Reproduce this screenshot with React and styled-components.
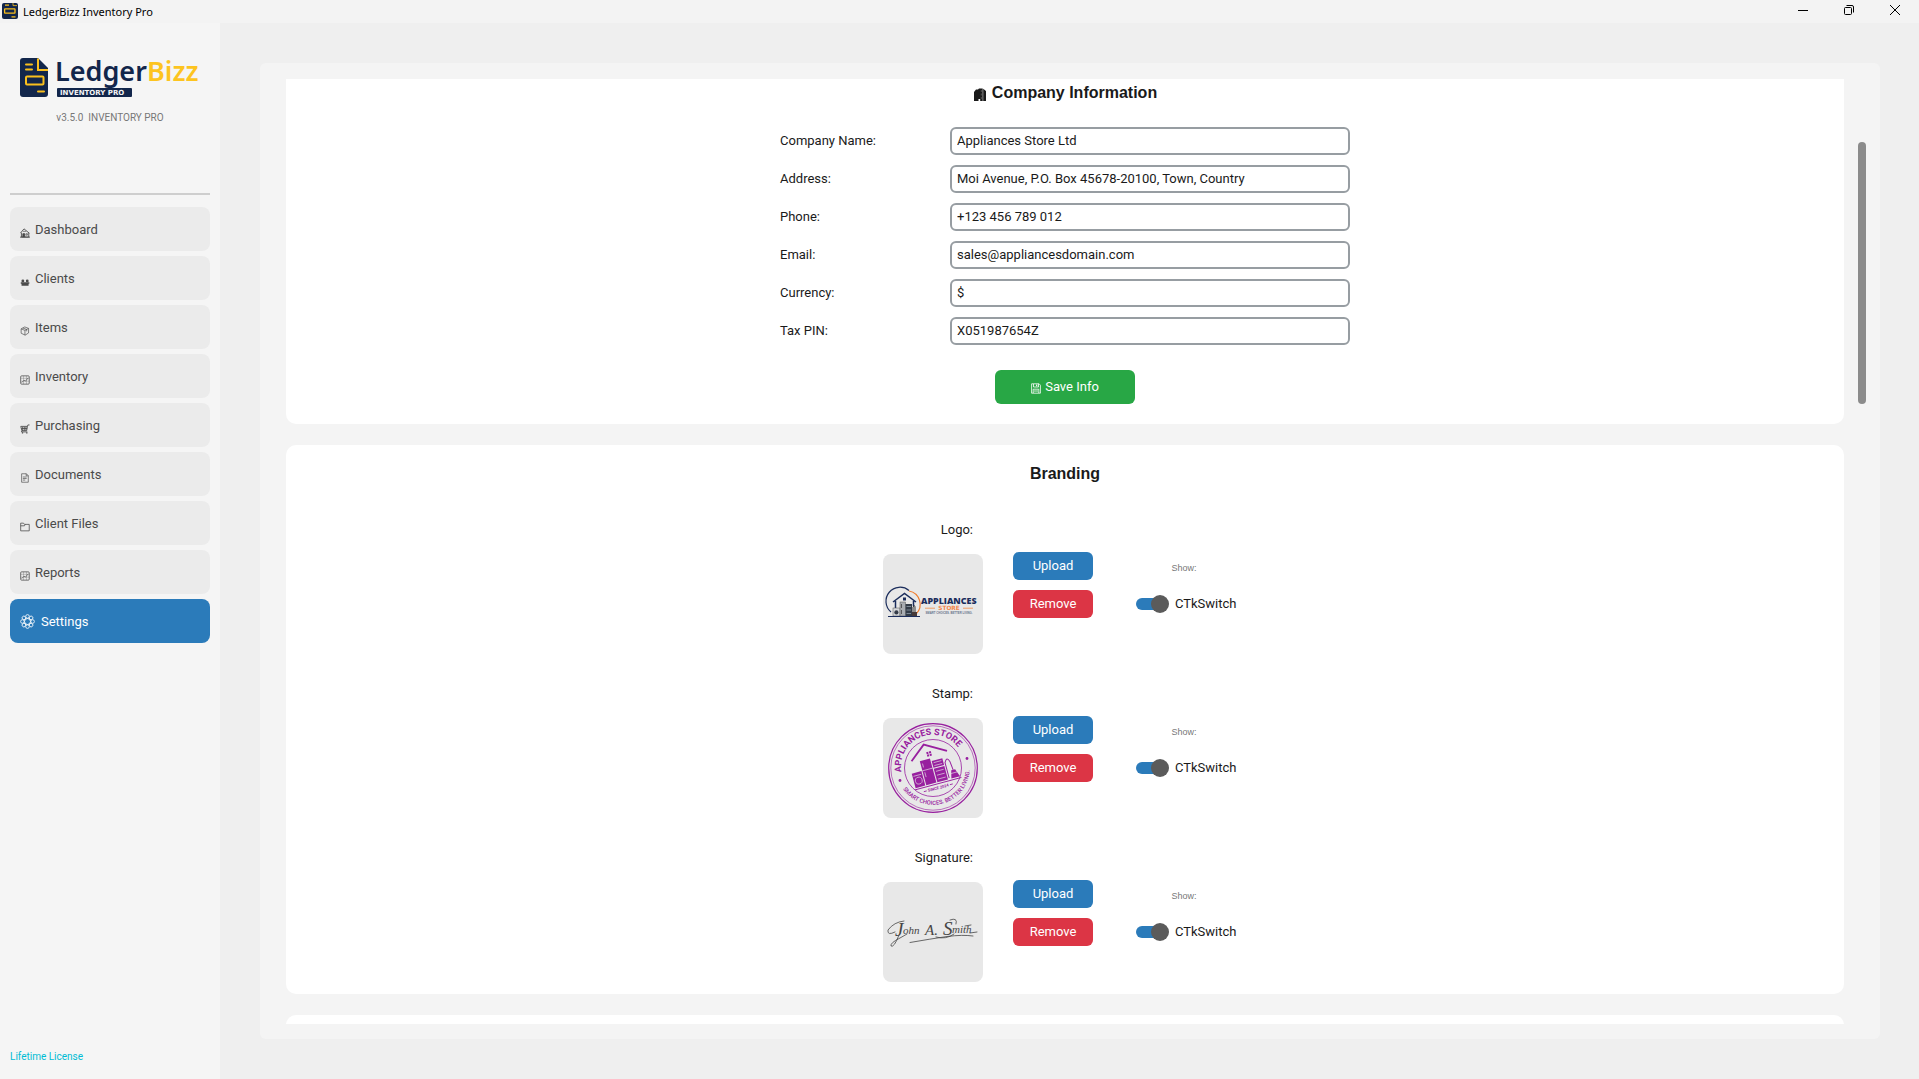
// App.jsx
import React, { useState } from "react";
import styled, { createGlobalStyle, css } from "styled-components";

const GlobalStyle = createGlobalStyle`
  * {
    box-sizing: border-box;
  }
  body {
    margin: 0;
    background-color: #efefef;
    color: #1a1a1a;
    font-family: Roboto, "Liberation Sans", sans-serif;
    font-size: 13px;
  }
  button,
  input {
    font-family: inherit;
    font-size: inherit;
  }
`;

const Window = styled.div`
  display: flex;
  flex-direction: column;
  height: 100vh;
  overflow: hidden;
`;

const TitleBar = styled.header`
  display: flex;
  align-items: flex-start;
  height: 23px;
  padding: 0 1px 0 2px;
  background-color: #f3f3f3;
  flex-shrink: 0;
`;

const TitleText = styled.span`
  flex: 1;
  padding-left: 5px;
  color: #000;
  font-family: "Noto Sans", sans-serif;
  font-size: 11px;
  line-height: 23px;
`;

const WindowButton = styled.button`
  display: flex;
  align-items: center;
  justify-content: center;
  width: 46px;
  height: 20px;
  padding: 0;
  border: none;
  background: none;
`;

const Body = styled.div`
  display: flex;
  flex: 1;
  min-height: 0;
`;

const Sidebar = styled.aside`
  display: flex;
  flex-direction: column;
  width: 220px;
  padding: 24px 10px 15px;
  background-color: #f5f5f5;
  flex-shrink: 0;
`;

const Brand = styled.div`
  display: flex;
  flex-direction: column;
  align-items: center;
  gap: 12px;
  height: 146px;
`;

const SmallText = styled.span`
  color: ${({ $color }) => $color || "#777"};
  font-size: 10px;
  line-height: 14px;
  white-space: pre;
`;

const Divider = styled.hr`
  width: 100%;
  height: 2px;
  margin: 0 0 12px;
  border: none;
  background-color: #cecece;
`;

const Nav = styled.nav`
  display: flex;
  flex-direction: column;
  flex: 1;
  gap: 5px;
`;

const NavButton = styled.button`
  display: flex;
  align-items: center;
  gap: 5px;
  height: 44px;
  padding: 1px 10px 0;
  border: none;
  border-radius: 8px;
  background-color: #ebebeb;
  color: #4a4a4a;

  svg {
    margin-top: 6px;
  }

  ${({ $active }) =>
    $active &&
    css`
      gap: 6px;
      background-color: #2b7bba;
      color: #fff;

      svg {
        margin-top: 0;
      }
    `}
`;

const Main = styled.main`
  display: flex;
  flex: 1;
  padding: 40px 39px 40px 40px;
`;

const Panel = styled.div`
  display: flex;
  flex: 1;
  gap: 14px;
  padding: 16px 14px 15px 26px;
  border-radius: 6px;
  background-color: #f4f4f4;
`;

const Viewport = styled.div`
  display: flex;
  flex-direction: column;
  flex: 1;
  gap: 21px;
  overflow: hidden;
`;

const Scrollbar = styled.div`
  width: 8px;
  padding-top: 63px;
`;

const Thumb = styled.div`
  height: 262px;
  border-radius: 4px;
  background-color: #8b8b8b;
`;

const Card = styled.section`
  display: flex;
  flex-direction: column;
  align-items: center;
  min-height: 60px;
  padding: ${({ $padding }) => $padding || "0"};
  border-radius: ${({ $cut }) => ($cut ? "0 0 10px 10px" : "10px")};
  background-color: #fff;
  flex-shrink: 0;
`;

const CardTitle = styled.h2`
  display: flex;
  align-items: center;
  gap: 5px;
  margin: 0;
  font-family: "Liberation Sans", sans-serif;
  font-size: 16px;
  font-weight: bold;
  line-height: 28px;

  svg {
    margin-top: 3px;
  }
`;

const Form = styled.form`
  display: flex;
  flex-direction: column;
  align-items: center;
  gap: 25px;
  padding-top: 20px;
`;

const Fields = styled.div`
  display: flex;
  flex-direction: column;
  gap: 10px;
`;

const Field = styled.div`
  display: grid;
  grid-template-columns: 170px 400px;
  align-items: center;
`;

const FieldLabel = styled.label`
  padding-bottom: 2px;
`;

const Input = styled.input`
  height: 28px;
  padding: 0 5px 2px;
  border: 2px solid #979da2;
  border-radius: 6px;
  outline: none;
  background-color: #fff;
  color: #1a1a1a;
`;

const Button = styled.button`
  display: flex;
  align-items: center;
  justify-content: center;
  gap: 4px;
  width: ${({ $wide }) => ($wide ? "140px" : "80px")};
  height: ${({ $wide }) => ($wide ? "34px" : "28px")};
  padding: 0 0 1px;
  border: none;
  border-radius: 6px;
  background-color: ${({ $color }) => $color};
  color: #fff;

  svg {
    margin-top: 4px;
  }
`;

const Assets = styled.div`
  display: flex;
  flex-direction: column;
  gap: 30px;
  padding-top: 32px;
`;

const Asset = styled.div`
  display: grid;
  grid-template-columns: 100px 80px 124px;
  column-gap: 30px;
  row-gap: 12px;
`;

const AssetName = styled.span`
  padding-right: 10px;
  line-height: 20px;
  text-align: right;
`;

const Preview = styled.div`
  display: flex;
  grid-row: 2;
  width: 100px;
  height: 100px;
  margin-top: 2px;
  border-radius: 8px;
  background-color: #e8e8e8;
`;

const Actions = styled.div`
  display: flex;
  flex-direction: column;
  grid-row: 2;
  gap: 10px;
`;

const ShowGroup = styled.div`
  display: flex;
  flex-direction: column;
  grid-row: 2;
  gap: 20px;
  padding: 9px 0 0 13px;
`;

const ShowLabel = styled(SmallText)`
  width: 96px;
  font-family: "Liberation Sans", sans-serif;
  font-size: 9px;
  text-align: center;
`;

const SwitchLabel = styled.label`
  display: flex;
  align-items: center;
  gap: 6px;
  line-height: 18px;
`;

const Switch = styled.input`
  display: flex;
  align-items: center;
  appearance: none;
  width: 33px;
  height: 18px;
  margin: 0;
  background: linear-gradient(
      ${({ checked }) => (checked ? "#2b7bba" : "#979da2")},
      ${({ checked }) => (checked ? "#2b7bba" : "#979da2")}
    )
    6px 3px / 20px 12px no-repeat;

  &::before {
    content: "";
    width: 15px;
    height: 12px;
    border-radius: 6px 0 0 6px;
    background-color: ${({ checked }) => (checked ? "#2b7bba" : "#979da2")};
  }

  &::after {
    content: "";
    width: 18px;
    height: 18px;
    border-radius: 50%;
    background-color: #5b5b5b;
    order: ${({ checked }) => (checked ? 1 : -1)};
  }
`;

const AppIconSvg = styled.svg`
  margin-top: 3px;
`;

const AppIcon = () => (
  <AppIconSvg width="16" height="16" viewBox="0 0 16 16" fill="none">
    <rect width="16" height="16" rx="2" fill="#12264b" />
    <g stroke="#f9bf1d" strokeWidth="1.3">
      <path d="M3 2.2h4M9.5 13.8h4" />
      <path d="M11 0v2.6h4" strokeWidth=".8" />
      <rect x="2.6" y="5.8" width="10.4" height="4.4" rx=".4" />
    </g>
  </AppIconSvg>
);

const BrandLogo = () => (
  <svg width="184" height="52" viewBox="0 -10 184 52" role="img" aria-label="LedgerBizz">
    <path d="M5 1h15l10 10v26a3 3 0 0 1-3 3H5a3 3 0 0 1-3-3V4a3 3 0 0 1 3-3z" fill="#12264b" />
    <path d="M20 1.5V13h10" stroke="#f9bf1d" strokeWidth="2" fill="none" />
    <path d="M8 7.5h6M8 12.5h6M20 34.5h6" stroke="#f9bf1d" strokeWidth="2" strokeLinecap="round" />
    <rect x="8" y="19.5" width="17.5" height="8" rx="1" stroke="#f9bf1d" strokeWidth="2" fill="none" />
    <g fontFamily="Noto Sans" fontSize="27" fontWeight="600">
      <text x="37" y="24" fill="#12264b">Ledger</text>
      <text x="129" y="24" fill="#fdc41f">Bizz</text>
    </g>
    <rect x="39" y="31" width="75" height="9" rx="1" fill="#12264b" />
    <text x="42" y="38" fontFamily="DejaVu Sans" fontSize="7" fontWeight="700" fill="#f5f5f5">
      INVENTORY PRO
    </text>
  </svg>
);

const navShapes = {
  home: (
    <>
      <path d="M.4 5.4 4.2.9l5.6 4.6M1.5 5v4.5h7.7V5" />
      <path d="M3 9.5V6h2v3.5" fill="currentColor" />
      <path d="M6.3 6h1.5v1.5H6.3zM3 3.5h3.5" strokeWidth=".7" />
      <path d="M0 9.6h10.5" />
    </>
  ),
  clients: (
    <g fill="currentColor" stroke="none">
      <circle cx="3" cy="4.1" r="1.5" />
      <circle cx="7.6" cy="4.1" r="1.5" />
      <path d="M.8 5.4h9v1.7H9v2.1H1.6V7.1H.8z" />
    </g>
  ),
  box: (
    <path
      d="M1.2 3 5 1l4 1.5v4.8L5.4 9.6 1.2 7.6zM1.2 3l4 1.6L9 2.5M5.2 4.6v5M3 2.1l4 1.5v2"
      strokeWidth=".7"
    />
  ),
  chart: (
    <>
      <rect x=".7" y=".9" width="9" height="8.7" rx="1" strokeWidth=".8" />
      <path d="M1 3.5h8.5M1 6.5h8.5M3.7 1v8.5M6.8 1v8.5" strokeWidth=".3" />
      <path d="m1.8 8 2.4-2.6 1.6 1L8.6 3" strokeWidth=".7" />
    </>
  ),
  cart: (
    <>
      <path d="M.8 2.5h7L7 7H2zM7.8 2.5 8.3 1H10M2 7l-.5 1.3h6.2M2.8 3v4M4.5 3v4M6.2 3v4M1.5 4.7h6" />
      <path d="M2 9.4h1.3M6.5 9.4h1.3" strokeWidth="1.3" />
    </>
  ),
  document: (
    <path d="M1.7.8h5l2 2v6.9h-7zM6.5.8V3h2.2M3 4.2h4M3 5.8h4M3 7.4h2.5" strokeWidth=".7" />
  ),
  folder: <path d="M.7 9.3V1.2h3l1 1.3h5v6.8zM.7 4h4L5.5 2.5" strokeWidth=".8" />,
};

const NavIcon = ({ name }) => (
  <svg width="10" height="10" viewBox="0 0 10.5 10.5" fill="none" stroke="currentColor" strokeWidth=".9">
    {navShapes[name]}
  </svg>
);

const GearIcon = () => (
  <svg width="15" height="15" viewBox="0 0 15 15" fill="none" stroke="currentColor">
    {[0, 45, 90, 135, 180, 225, 270, 315].map((angle) => (
      <circle key={angle} cx="7.5" cy="2.4" r="1.8" transform={`rotate(${angle} 7.5 7.5)`} strokeWidth=".8" />
    ))}
    <circle cx="7.5" cy="7.5" r="3" strokeWidth="1" />
  </svg>
);

const BuildingIcon = () => (
  <svg width="14" height="13" viewBox="0 0 14 13" fill="#1a1a1a">
    <path d="M1 4 3 1.5h2L6 .5h3.7V13H7.2v-2H5.5v2H1zM10.2.8 13 3v10h-2.8z" />
    <path d="M8.3 2v2M8.3 5.5v2M8.3 9v2" stroke="#777" strokeWidth=".6" />
  </svg>
);

const SaveIcon = () => (
  <svg width="10" height="11" viewBox="0 0 10 11" fill="none" stroke="#fff" strokeWidth=".8">
    <path d="M.6.8h7.5l1.3 1.4v8H.6z" />
    <path d="M2.5 1v3h5V1M2.2 10V6.2h5.6V10M3 8h4" />
    <path d="M5.7 1.5v1.7" strokeWidth="1.2" />
  </svg>
);

const StoreLogo = () => (
  <svg width="100" height="100" viewBox="0 0 100 100" role="img" aria-label="Appliances Store logo">
    <path d="M8 58A14 14 0 0 1 26 36.5" stroke="#1b2d5c" strokeWidth="1.2" fill="none" />
    <path d="M26 37A13.5 13.5 0 0 1 33 60" stroke="#f07c2c" strokeWidth="1.2" fill="none" />
    <path d="m10 48 11.5-8.5L33 48M12.5 47v14M30.5 47v5" stroke="#1b2d5c" strokeWidth="1.5" fill="none" />
    <path d="M20 43.5h3v3h-3z" fill="#1b2d5c" />
    <rect x="10" y="54" width="7" height="8" fill="#d5d7da" stroke="#555" strokeWidth=".5" />
    <circle cx="13.4" cy="58.4" r="2.1" fill="#353c48" />
    <rect x="17" y="48" width="5.5" height="14" fill="#a9adb2" stroke="#555" strokeWidth=".5" />
    <path d="M18.5 50v4M18.5 56v4" stroke="#333" strokeWidth=".7" />
    <rect x="22.5" y="50" width="6.5" height="12" fill="#333c48" />
    <path d="M23.5 52.5h4.5M23.5 56h4.5M23.5 59.5h4.5" stroke="#9daab7" strokeWidth=".7" />
    <path d="M30 61v-8q2-3 2 1v5" stroke="#333" fill="none" />
    <path d="M29 58h5v4h-5z" fill="#473a38" />
    <path d="M5 62.5h32" stroke="#1b2d5c" />
    <text x="38" y="50" fontFamily="Open Sans" fontSize="8.9" fontWeight="800" fill="#1b2d5c">
      APPLIANCES
    </text>
    <path d="M42 54.2h10M80 54.2h10" stroke="#f07c2c" strokeWidth=".7" />
    <text x="66" y="56.4" textAnchor="middle" fontFamily="DejaVu Sans" fontSize="5.8" fontWeight="700" fill="#f58549">
      STORE
    </text>
    <text x="66" y="60.4" textAnchor="middle" fontFamily="Liberation Sans" fontSize="2.8" fontWeight="700" fill="#68738d">
      SMART CHOICES. BETTER LIVING.
    </text>
  </svg>
);

const StoreStamp = () => (
  <svg width="100" height="100" viewBox="0 0 100 100" role="img" aria-label="Appliances Store stamp">
    <defs>
      <path id="stamp-top" d="M18.5 54A31.7 31.7 0 1 1 81 43" />
      <path id="stamp-bottom" d="M20 71A36.6 36.6 0 0 0 86.5 46" />
    </defs>
    <g fill="none" stroke="#98209f">
      <circle cx="50" cy="50" r="44.3" strokeWidth="1.2" />
      <circle cx="50" cy="50" r="42.2" strokeWidth=".6" />
      <circle cx="50" cy="50" r="28.5" strokeWidth=".8" />
    </g>
    <g fill="#98209f" fontFamily="Roboto" fontWeight="700">
      <text fontSize="9">
        <textPath href="#stamp-top">APPLIANCES STORE</textPath>
      </text>
      <text fontSize="5.8" fontWeight="500">
        <textPath href="#stamp-bottom">SMART CHOICES. BETTER LIVING.</textPath>
      </text>
      <circle cx="17" cy="62.5" r="1.4" />
      <circle cx="84" cy="40.5" r="1.4" />
    </g>
    <g transform="rotate(-15 50 50)">
      <path d="m31 38 16-13 21 12" fill="none" stroke="#98209f" strokeWidth="1.8" />
      <path d="M47.5 33h2v2h-2zM50.2 33h2v2h-2zM47.5 35.7h2v2h-2zM50.2 35.7h2v2h-2z" fill="#98209f" />
      <g fill="#98209f">
        <rect x="28" y="50" width="10" height="15" />
        <rect x="39" y="40" width="10.5" height="25" />
        <rect x="50.5" y="43" width="11" height="7" />
        <rect x="50.5" y="51" width="11" height="14" />
        <path d="m67 57 4 0 3 8H65z" />
      </g>
      <g fill="none" stroke="#e8e8e8" strokeWidth=".6">
        <circle cx="33" cy="58.5" r="3.4" />
        <path d="M29 53h8M39 50h10.5M41 43v4M41 52v5M52 45h8M52 48h8M52 54h8M52 58h8M52 62h8M66 60h7" />
      </g>
      <path d="M63 64V48q3-6 5 0l1 9" fill="none" stroke="#98209f" strokeWidth="1" />
      <path d="M27 66.5h48" stroke="#98209f" strokeWidth=".9" />
      <path d="M35 70.5h3M62 70.5h3" stroke="#98209f" strokeWidth=".8" />
      <text x="50" y="71.8" textAnchor="middle" fontFamily="Roboto" fontSize="4" fontWeight="700" fill="#98209f">
        SINCE 2024
      </text>
    </g>
  </svg>
);

const SignatureImage = () => (
  <svg width="100" height="100" viewBox="0 0 100 100" role="img" aria-label="Signature">
    <g fill="#454545" fontFamily="Liberation Serif" fontStyle="italic">
      <text x="12" y="54" fontSize="19">J</text>
      <text x="20" y="52" fontSize="11">ohn</text>
      <text x="42" y="53" fontSize="15">A.</text>
      <text x="60" y="53" fontSize="19">S</text>
      <text x="69" y="51" fontSize="11">mith</text>
    </g>
    <g fill="none" stroke="#454545" strokeWidth=".8" strokeLinecap="round">
      <path d="M21 39Q11 40 5 48Q4 54 12 50M16 53Q11 66 8 64Q7 61 17 56L24 52" />
      <path d="M53 55q10 3 18-3M73 42Q75 35 67 38M87 51l7-1M82 44l6-1" />
      <path d="M27 60.5Q47 57 64 54.5Q80 52.5 90 54" />
    </g>
  </svg>
);

const navItems = [
  { label: "Dashboard", icon: "home" },
  { label: "Clients", icon: "clients" },
  { label: "Items", icon: "box" },
  { label: "Inventory", icon: "chart" },
  { label: "Purchasing", icon: "cart" },
  { label: "Documents", icon: "document" },
  { label: "Client Files", icon: "folder" },
  { label: "Reports", icon: "chart" },
  { label: "Settings", icon: "gear" },
];

const companyFields = [
  { id: "name", label: "Company Name:" },
  { id: "address", label: "Address:" },
  { id: "phone", label: "Phone:" },
  { id: "email", label: "Email:" },
  { id: "currency", label: "Currency:" },
  { id: "pin", label: "Tax PIN:" },
];

const BrandingAsset = ({ label, children }) => {
  const [visible, setVisible] = useState(true);

  return (
    <Asset>
      <AssetName>{label}</AssetName>
      <Preview>{children}</Preview>
      <Actions>
        <Button type="button" $color="#2b7bba">Upload</Button>
        <Button type="button" $color="#dc3545">Remove</Button>
      </Actions>
      <ShowGroup>
        <ShowLabel>Show:</ShowLabel>
        <SwitchLabel>
          <Switch type="checkbox" checked={visible} onChange={(e) => setVisible(e.target.checked)} />
          CTkSwitch
        </SwitchLabel>
      </ShowGroup>
    </Asset>
  );
};

const App = () => {
  const [page, setPage] = useState("Settings");
  const [company, setCompany] = useState({
    name: "Appliances Store Ltd",
    address: "Moi Avenue, P.O. Box 45678-20100, Town, Country",
    phone: "+123 456 789 012",
    email: "sales@appliancesdomain.com",
    currency: "$",
    pin: "X051987654Z",
  });

  const handleChange = (e) => {
    setCompany({ ...company, [e.target.id]: e.target.value });
  };

  return (
    <>
      <GlobalStyle />
      <Window>
        <TitleBar>
          <AppIcon />
          <TitleText>LedgerBizz Inventory Pro</TitleText>
          <WindowButton aria-label="Minimize">
            <svg width="10" height="10" stroke="#000"><path d="M0 5.5h10" /></svg>
          </WindowButton>
          <WindowButton aria-label="Restore">
            <svg width="10" height="10" fill="none" stroke="#000">
              <rect x=".5" y="2.5" width="7" height="7" rx="1" />
              <path d="M2.5.5H8a1.5 1.5 0 0 1 1.5 1.5v5.5" />
            </svg>
          </WindowButton>
          <WindowButton aria-label="Close">
            <svg width="10" height="10" stroke="#000"><path d="m0 0 10 10M10 0 0 10" /></svg>
          </WindowButton>
        </TitleBar>
        <Body>
          <Sidebar>
            <Brand>
              <BrandLogo />
              <SmallText>{"v3.5.0  INVENTORY PRO"}</SmallText>
            </Brand>
            <Divider />
            <Nav>
              {navItems.map(({ label, icon }) => (
                <NavButton key={label} $active={label === page} onClick={() => setPage(label)}>
                  {icon === "gear" ? <GearIcon /> : <NavIcon name={icon} />}
                  {label}
                </NavButton>
              ))}
            </Nav>
            <SmallText $color="#00bcd4">Lifetime License</SmallText>
          </Sidebar>
          <Main>
            <Panel>
              <Viewport>
                <Card $cut $padding="0 0 20px">
                  <CardTitle>
                    <BuildingIcon />
                    Company Information
                  </CardTitle>
                  <Form onSubmit={(e) => e.preventDefault()}>
                    <Fields>
                      {companyFields.map(({ id, label }) => (
                        <Field key={id}>
                          <FieldLabel htmlFor={id}>{label}</FieldLabel>
                          <Input id={id} type="text" value={company[id]} onChange={handleChange} />
                        </Field>
                      ))}
                    </Fields>
                    <Button type="submit" $wide $color="#28a745">
                      <SaveIcon />
                      Save Info
                    </Button>
                  </Form>
                </Card>
                <Card $padding="15px 0 12px">
                  <CardTitle>Branding</CardTitle>
                  <Assets>
                    <BrandingAsset label="Logo:">
                      <StoreLogo />
                    </BrandingAsset>
                    <BrandingAsset label="Stamp:">
                      <StoreStamp />
                    </BrandingAsset>
                    <BrandingAsset label="Signature:">
                      <SignatureImage />
                    </BrandingAsset>
                  </Assets>
                </Card>
                <Card />
              </Viewport>
              <Scrollbar>
                <Thumb />
              </Scrollbar>
            </Panel>
          </Main>
        </Body>
      </Window>
    </>
  );
};

export default App;
